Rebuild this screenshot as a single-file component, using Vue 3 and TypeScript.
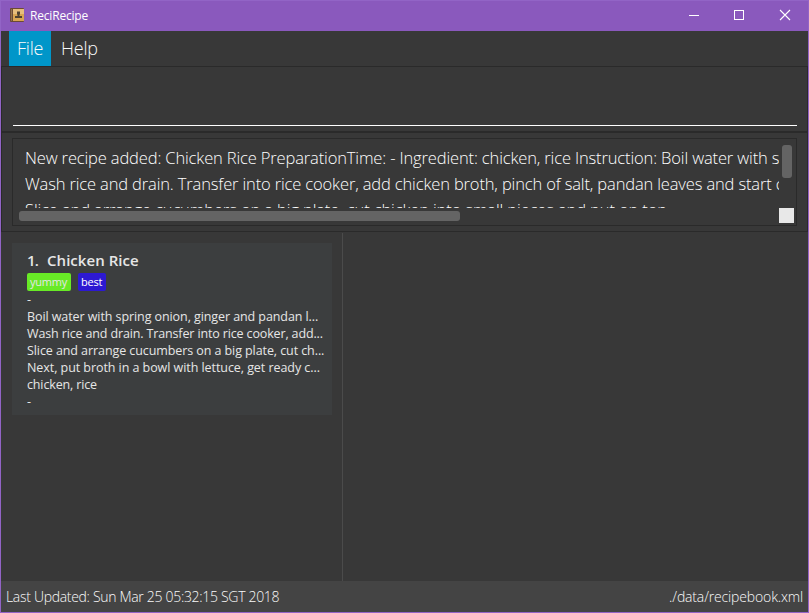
<script setup lang="ts">
interface Line { text: string; cls?: string }
interface Tag { name: string; cls: string }

const menus: { label: string; active: boolean }[] = [
  { label: 'File', active: true },
  { label: 'Help', active: false },
]

const resultLines: Line[] = [
  { text: 'New recipe added: Chicken Rice PreparationTime: - Ingredient: chicken, rice Instruction: Boil water with spring onion, ginger and pandan leaves.' },
  { text: 'Wash rice and drain. Transfer into rice cooker, add chicken broth, pinch of salt, pandan leaves and start cooking.' },
  { text: 'Slice and arrange cucumbers on a big plate, cut chicken into small pieces and put on top', cls: 'third' },
]

const tags: Tag[] = [
  { name: 'yummy', cls: 'green' },
  { name: 'best', cls: 'blue' },
]

const details: Line[] = [
  { text: '-' },
  { text: 'Boil water with spring onion, ginger and pandan l...' },
  { text: 'Wash rice and drain. Transfer into rice cooker, add...', cls: 'tight' },
  { text: 'Slice and arrange cucumbers on a big plate, cut ch...' },
  { text: 'Next, put broth in a bowl with lettuce, get ready c...', cls: 'loose' },
  { text: 'chicken, rice', cls: 'tight' },
  { text: '-' },
]
</script>

<template>
  <div class="window">
    <header class="titlebar">
      <svg class="app-icon" width="14" height="14" viewBox="0 0 14 14">
        <rect width="14" height="14" rx="1" fill="#6b4a35" />
        <rect x="1" y="1" width="1" height="12" fill="#8f704e" />
        <rect x="3" y="1" width="11" height="12" fill="#d9a552" />
        <rect x="3" y="1" width="11" height="5" fill="#e6bd7c" />
        <path d="M7 3.500h3v3H9.500V8H12v2H5V8h2.500V6.500H7z" fill="#4e4030" />
      </svg>
      <span class="title">ReciRecipe</span>
      <svg class="controls" width="102" height="12" viewBox="0 0 102 12">
        <path d="M0 6.5h10" stroke="#fff" />
        <rect x="45.5" y="1.5" width="9" height="9" fill="none" stroke="#fff" />
        <path d="M91 1l10 10M101 1l-10 10" stroke="#fff" stroke-width="1.1" />
      </svg>
    </header>

    <nav class="menubar">
      <span v-for="m in menus" :key="m.label" class="menu" :class="{ active: m.active }">{{ m.label }}</span>
    </nav>

    <section class="command"><div class="command-input"></div></section>

    <section class="result">
      <div class="result-box">
        <div class="result-row">
          <div class="result-text">
            <div v-for="l in resultLines" :key="l.text" :class="l.cls">{{ l.text }}</div>
          </div>
          <div class="v-thumb"></div>
        </div>
        <div class="h-row">
          <div class="h-thumb"></div>
          <div class="corner"></div>
        </div>
      </div>
    </section>

    <main class="content">
      <aside class="list">
        <article class="card">
          <h2><span class="index">1.</span><span class="name">Chicken Rice</span></h2>
          <div class="tags">
            <span v-for="t in tags" :key="t.name" class="tag" :class="t.cls">{{ t.name }}</span>
          </div>
          <div v-for="(d, i) in details" :key="i" class="detail" :class="d.cls">{{ d.text }}</div>
        </article>
      </aside>
      <div class="viewer"></div>
    </main>

    <footer class="status">
      <span class="updated">Last Updated: Sun Mar 25 05:32:15 SGT 2018</span>
      <span class="path">./data/recipebook.xml</span>
    </footer>
  </div>
</template>

<style scoped>
.window {
  box-sizing: border-box;
  width: 809px;
  height: 613px;
  display: flex;
  flex-direction: column;
  overflow: hidden;
  background: #383838;
  border: 1px solid #9264c6;
  font-family: "Open Sans", "Noto Sans", sans-serif;
  color: #fff;
  white-space: nowrap;
}
.titlebar {
  flex: none;
  height: 30px;
  box-sizing: border-box;
  display: flex;
  align-items: center;
  background: #8a59bd;
  padding: 0 17px 0 9px;
}
.app-icon { margin-top: -2px; }
.title {
  margin-left: 6px;
  font-size: 12px;
  line-height: 18px;
  letter-spacing: -0.19px;
}
.controls { margin-left: auto; margin-top: -2px; }
.menubar {
  flex: none;
  height: 35px;
  display: flex;
  padding-left: 8px;
}
.menu {
  width: 42px;
  box-sizing: border-box;
  padding-left: 8px;
  font-size: 18px;
  font-weight: 300;
  line-height: 35px;
  letter-spacing: -0.2px;
  color: #fafafa;
}
.menu + .menu { padding-left: 10px; }
.menu.active { background: #0096c9; }
.command {
  flex: none;
  height: 67px;
  box-sizing: border-box;
  border: 1px solid #2a2a2a;
  border-bottom-width: 2px;
  padding: 0 10px 0 11px;
  display: flex;
}
.command-input {
  flex: 1;
  height: 58px;
  border-bottom: 1px solid #fff;
}
.result {
  flex: none;
  height: 99px;
  box-sizing: border-box;
  border: 1px solid #2a2a2a;
  border-top: 0;
  padding: 5px 10px 5px 10px;
}
.result-box {
  height: 88px;
  box-sizing: border-box;
  border: 1px solid #2a2a2a;
  padding: 6px 2px 0 6px;
}
.result-row {
  display: flex;
  height: 63px;
}
.result-text {
  width: 754px;
  margin-left: 6px;
  overflow: hidden;
  font-size: 16.5px;
  font-weight: 300;
  line-height: 26px;
  letter-spacing: -0.142px;
}
.third { letter-spacing: -0.12px; }
.v-thumb {
  width: 10px;
  height: 33px;
  margin-left: 3px;
  border-radius: 3px;
  background: #646464;
}
.h-row {
  display: flex;
  justify-content: space-between;
}
.h-thumb {
  width: 441px;
  height: 10px;
  margin-top: 3px;
  border-radius: 3px;
  background: #646464;
}
.corner {
  width: 15px;
  height: 15px;
  background: #e8e8e8;
}
.content {
  flex: 1;
  display: flex;
  padding-top: 1px;
}
.list {
  width: 342px;
  box-sizing: border-box;
  border-right: 1px solid #4b4b4b;
  padding: 10px 10px 0 11px;
}
.viewer { flex: 1; }
.card {
  height: 172px;
  width: 320px;
  box-sizing: border-box;
  padding: 7px 7px 0 15px;
  background: #3c3e3f;
  color: #e6e6e6;
}
h2 {
  margin: 0;
  display: flex;
  font-size: 15px;
  font-weight: 600;
  line-height: 21px;
}
.index { width: 20px; letter-spacing: -0.8px; }
.name { letter-spacing: 0.05px; }
.tags {
  display: flex;
  gap: 7px;
  margin-top: 2px;
}
.tag {
  height: 18px;
  box-sizing: border-box;
  padding-left: 3px;
  border-radius: 2px;
  font-size: 11px;
  line-height: 17px;
  letter-spacing: -0.2px;
}
.green { width: 44px; background: #68ea26; }
.blue { width: 28px; background: #2d19d2; color: #fff; }
.detail {
  font-size: 12.5px;
  line-height: 17px;
  letter-spacing: -0.082px;
}
.tight { letter-spacing: -0.14px; }
.loose { letter-spacing: -0.06px; }
.status {
  flex: none;
  height: 31px;
  box-sizing: border-box;
  display: flex;
  justify-content: space-between;
  padding: 0 5px;
  background: #444;
  font-size: 14px;
  font-weight: 300;
  line-height: 31px;
  color: #fafafa;
}
.updated { letter-spacing: -0.31px; }
.path { letter-spacing: -0.15px; }
</style>
